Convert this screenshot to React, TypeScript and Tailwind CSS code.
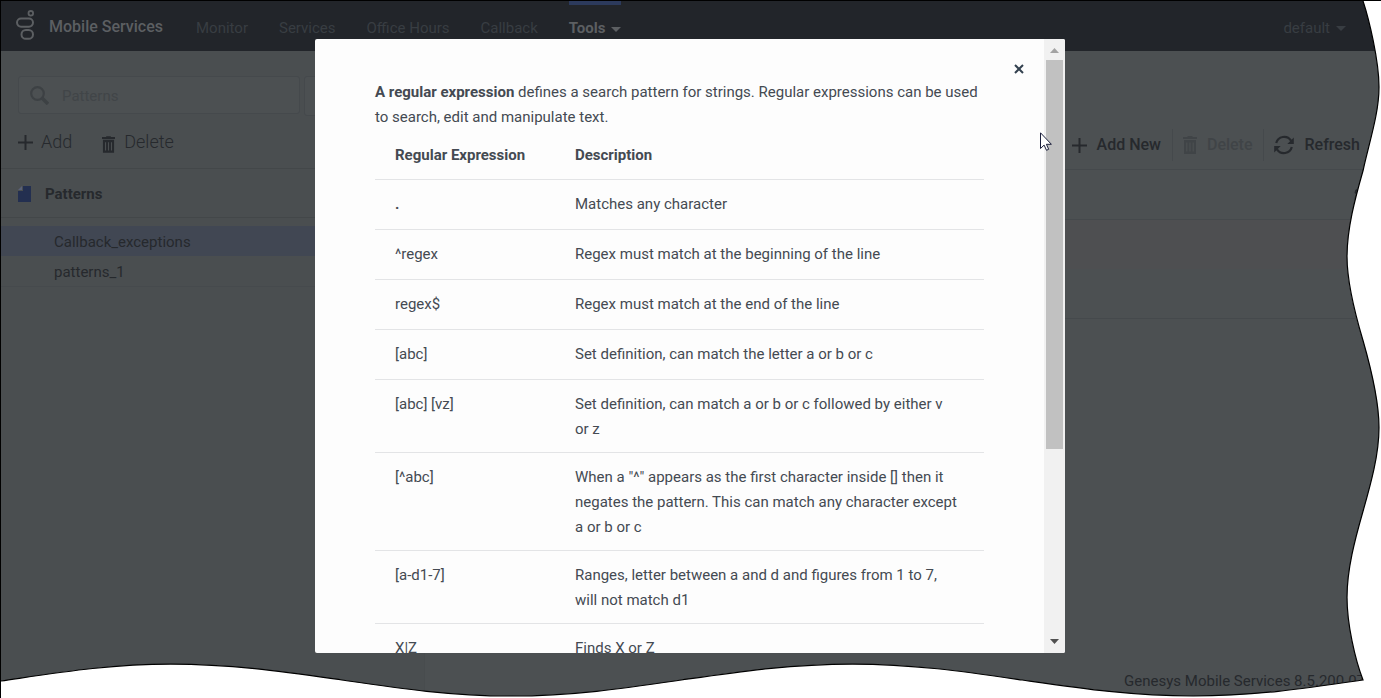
import type { ReactNode } from 'react';
import { Settings } from 'lucide-react';

const navLinks = ['Monitor', 'Services', 'Office Hours', 'Callback'];

const patterns = [
  { name: 'Callback_exceptions', selected: true },
  { name: 'patterns_1', selected: false },
];

const regexRows = [
  { expr: '.', text: 'Matches any character' },
  { expr: '^regex', text: 'Regex must match at the beginning of the line' },
  { expr: 'regex$', text: 'Regex must match at the end of the line' },
  { expr: '[abc]', text: 'Set definition, can match the letter a or b or c' },
  { expr: '[abc] [vz]', text: 'Set definition, can match a or b or c followed by either v or z' },
  {
    expr: '[^abc]',
    text: 'When a "^" appears as the first character inside [] then it negates the pattern. This can match any character except a or b or c',
  },
  { expr: '[a-d1-7]', text: 'Ranges, letter between a and d and figures from 1 to 7, will not match d1' },
  { expr: 'X|Z', text: 'Finds X or Z' },
];

function Logo() {
  return (
    <svg className="w-[18px] h-[30px] overflow-visible" viewBox="0 0 18 30" fill="none" stroke="currentColor">
      <circle cx="14.8" cy="2.3" r="2.3" strokeWidth="1.8" />
      <rect x="1" y="7.5" width="16" height="8.2" rx="4.1" strokeWidth="2" />
      <rect x="5.5" y="19" width="11.5" height="8.8" rx="4.4" strokeWidth="2" />
    </svg>
  );
}

function PlusIcon() {
  return (
    <svg className="w-[15px] h-[15px]" viewBox="0 0 15 15" fill="none" stroke="currentColor" strokeWidth="2">
      <path d="M7.5 0v15M0 7.5h15" />
    </svg>
  );
}

function TrashIcon({ className }: { className: string }) {
  return (
    <svg className={className} viewBox="0 0 14 18" fill="currentColor">
      <path d="M4.5 1V0h5v1H14v2H0V1z" />
      <path fillRule="evenodd" d="M1 4h12v14H1zM3.2 6.5v9h1.2v-9zM6.4 6.5v9h1.2v-9zM9.6 6.5v9h1.2v-9z" />
    </svg>
  );
}

function RefreshIcon() {
  return (
    <svg className="w-[22px] h-5" viewBox="0 0 22 20" fill="none" stroke="currentColor" strokeWidth="2.2">
      <path d="M3.2 8A8.2 8.2 0 0 1 18 5.6M18.8 12A8.200 8.200 0 0 1 4 14.4" />
      <path d="M20.8 2.5V9h-6.500zM1.200 17.500V11h6.500z" fill="currentColor" stroke="none" />
    </svg>
  );
}

function Caret() {
  return (
    <svg className="w-[10px] h-[5px]" viewBox="0 0 10 5" fill="currentColor">
      <path d="M0 0h10L5 5z" />
    </svg>
  );
}

function Header() {
  return (
    <header className="flex items-stretch h-[50px] pl-[15px] pr-[35px] bg-[#22252a] text-[15px] text-[#383d42]">
      <div className="flex items-center gap-[15px] text-base font-medium text-[#5c5f62]">
        <Logo />
        <span className="pt-[2px]">Mobile Services</span>
      </div>
      <nav className="flex ml-[33px] gap-[31px]">
        {navLinks.map(l => (
          <a key={l} href="#" className="pt-4">{l}</a>
        ))}
        <a href="#" className="flex items-start gap-[6px] pt-3 border-t-4 border-[#2c3a5c] text-[#5c5f62]">
          <span className="font-bold">Tools</span>
          <span className="pt-[10px] leading-none"><Caret /></span>
        </a>
      </nav>
      <button className="flex items-center gap-[6px] ml-auto pt-1">
        default <Caret />
      </button>
    </header>
  );
}

function Sidebar() {
  return (
    <aside className="w-[424px] shrink-0 bg-[#4a4e50] text-[#26292d] border-r border-[#484c4e]">
      <div className="flex gap-1 pl-[17px] pr-4 pt-[25px]">
        <label className="flex items-center w-[282px] h-[38px] px-[11px] gap-[13px] rounded-[3px] border border-[#45494c] bg-[#4c5052] text-[#3d4144]">
          <svg className="w-[19px] h-[19px] shrink-0" viewBox="0 0 19 19" fill="none" stroke="currentColor">
            <circle cx="7.5" cy="7.5" r="6.3" strokeWidth="2.2" />
            <path d="M12 12l6 6" strokeWidth="3.5" />
          </svg>
          <input
            aria-label="Search"
            placeholder="Patterns"
            className="w-full pt-[2px] bg-transparent text-[15px] placeholder:text-[#414548] outline-none"
          />
        </label>
        <button aria-label="Filter" className="h-10 grow rounded-[3px] border border-[#45494c] bg-[#4c5052]" />
      </div>

      <div className="flex items-center gap-[30px] h-[53px] pl-[17px] border-b border-[#434749] text-lg font-light">
        <button className="flex items-center gap-2"><PlusIcon /> Add</button>
        <button className="flex items-center gap-[9px]">
          <span className="pt-1"><TrashIcon className="w-[13px] h-[17px]" /></span> Delete
        </button>
      </div>

      <div className="flex items-center gap-[14px] h-[49px] pt-[2px] pl-[17px] border-b border-[#434749] text-[15px] font-bold">
        <svg className="w-[13px] h-4" viewBox="0 0 13 16" fill="#232f50">
          <path d="M5 0h8v16H0V5h5z" />
          <path d="M4 0v4H0z" fill="#5a6178" />
        </svg>
        Patterns
      </div>

      <ul className="pt-2 border-b border-[#464a4d] text-[15px]">
        {patterns.map(p => (
          <li key={p.name} className={p.selected ? 'bg-[#414753]' : ''}>
            <a href="#" className="flex items-center h-[30px] pt-[2px] pl-[53px]">{p.name}</a>
          </li>
        ))}
      </ul>
    </aside>
  );
}

function ToolButton({ children, className = '' }: { children: ReactNode; className?: string }) {
  return <button className={`flex items-center gap-[10px] h-8 ${className}`}>{children}</button>;
}

function Main() {
  return (
    <main className="flex flex-col grow bg-[#4c5052] text-[#26292d]">
      <div className="flex items-end justify-end h-[119px] pr-[21px] pb-2 border-b border-[#45494c] text-base font-medium">
        <ToolButton className="pr-[11px]"><PlusIcon /> Add New</ToolButton>
        <ToolButton className="px-[10px] border-x border-[#45494c] text-[#404447]">
          <TrashIcon className="w-[14px] h-[18px]" /> Delete
        </ToolButton>
        <ToolButton className="pl-[9px]"><RefreshIcon /> Refresh</ToolButton>
      </div>
      <div className="flex items-center justify-end h-[50px] pr-2 border-b border-[#45494c]">
        <button aria-label="Settings"><Settings className="w-5 h-5" /></button>
      </div>
      <div className="h-[49px] bg-[#4e4f51]" />
      <div className="h-[50px] border-b border-[#45494c]" />
      <footer className="mt-auto pb-[6px] pr-4 text-right text-[15px]">Genesys Mobile Services 8.5.200.07</footer>
    </main>
  );
}

function Scrollbar() {
  return (
    <div className="flex flex-col w-[21px] shrink-0 px-[2px] bg-[#f1f1f1]" aria-hidden="true">
      <span className="flex items-center justify-center h-[21px] pt-[2px] text-[#a3a3a3]">
        <svg className="w-[9px] h-[5px]" viewBox="0 0 9 5" fill="currentColor"><path d="M0 5h9L4.5 0z" /></svg>
      </span>
      <span className="grow-17 bg-[#c1c1c1]" />
      <span className="grow-8" />
      <span className="flex items-center justify-center h-[21px] pb-[2px] text-[#505050]">
        <svg className="w-[9px] h-[5px]" viewBox="0 0 9 5" fill="currentColor"><path d="M0 0h9L4.5 5z" /></svg>
      </span>
    </div>
  );
}

function RegexHelp() {
  return (
    <div
      role="dialog"
      aria-label="Regular expressions"
      className="relative flex w-[750px] h-full overflow-hidden rounded-[2px] bg-[#fdfdfd] text-[15px] leading-[25px] text-[#444a52]"
    >
      <div className="grow overflow-hidden px-[60px] pt-[41px]">
        <p>
          <b className="font-bold">A regular expression</b> defines a search pattern for strings. Regular expressions can
          be used to search, edit and manipulate text.
        </p>
        <table className="w-full table-fixed border-separate border-spacing-0 text-left">
          <thead>
            <tr>
              <th className="w-[180px] h-[50px] pt-3 pb-[10px] px-5 border-b border-[#e3e4e6] font-bold">Regular Expression</th>
              <th className="h-[50px] pt-3 pb-[10px] px-5 border-b border-[#e3e4e6] font-bold">Description</th>
            </tr>
          </thead>
          <tbody>
            {regexRows.map(r => (
              <tr key={r.expr}>
                <td className={`h-[50px] pt-3 pb-[10px] px-5 border-b border-[#e3e4e6] align-top ${r.expr === '.' ? 'font-bold' : ''}`}>
                  {r.expr}
                </td>
                <td className="h-[50px] pt-3 pb-[10px] pl-5 pr-[26px] border-b border-[#e3e4e6] align-top">{r.text}</td>
              </tr>
            ))}
          </tbody>
        </table>
      </div>
      <button aria-label="Close" className="absolute top-6 right-10 p-[1px] text-[#33414f]">
        <svg className="w-[10px] h-[10px]" viewBox="0 0 10 10" stroke="currentColor" strokeWidth="2">
          <path d="M1 1l8 8M9 1l-8 8" />
        </svg>
      </button>
      <Scrollbar />
    </div>
  );
}

// White paper outside of the wavy right and bottom edges
function TornEdge() {
  const edge =
    'M1363 0C1369 18 1379 60 1379 86C1379 113 1369 142 1363 170C1355 198 1347 228 1347 256C1347 283 1355 313 1363 340' +
    'C1371 368 1379 399 1379 427C1379 454 1371 483 1363 511C1355 539 1347 569 1347 597C1347 624 1355 659 1363 680' +
    'C1308 688 1255 696 1193 696C1131 696 1078 688 1022 680C967 672 914 664 852 664C790 664 737 672 681 680' +
    'C626 688 573 696 511 696C449 696 396 688 341 680C285 672 232 664 170 664C108 664 55 673 0 681';
  return (
    <svg
      className="absolute inset-0 w-full h-full pointer-events-none"
      viewBox="0 0 1381 698"
      preserveAspectRatio="none"
      fill="none"
    >
      <path d={edge + 'V698H1381V0Z'} fill="#fff" />
      <path d={edge} stroke="#000" strokeWidth="1.2" />
    </svg>
  );
}

export default function App() {
  return (
    <div className="relative flex flex-col h-screen overflow-hidden border-t border-l border-black bg-[#4c5052] font-['Roboto',sans-serif]">
      <Header />
      <div className="flex grow">
        <Sidebar />
        <Main />
      </div>

      <div className="absolute inset-0 flex justify-center pt-[38px] pb-[45px] pr-[2px]">
        <RegexHelp />
      </div>

      <TornEdge />

      {/* Mouse pointer */}
      <svg className="absolute left-[1039px] top-[131px] w-3 h-[19px]" viewBox="0 0 12 19" fill="#fff" stroke="#1b1f3b">
        <path d="M.5 .8v15.700l3.600-3.400 2.400 5.200 2.200-1-2.300-5h5z" />
      </svg>
    </div>
  );
}
